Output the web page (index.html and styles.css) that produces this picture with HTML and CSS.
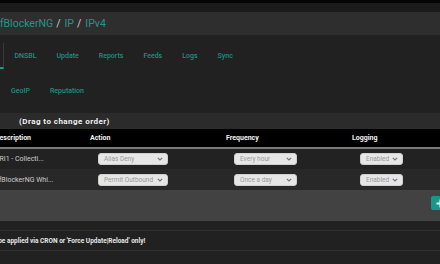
FILE: index.html
```html
<!DOCTYPE html>
<html>
<head>
    <title>Firewall: pfBlockerNG: IP: IPv4</title>
    <meta charset="UTF-8">
    <link rel="stylesheet" href="styles.css">
</head>
<body>
    <div class="topbar"></div>

    <!-- Fil d'Ariane -->
    <div class="crumbs">
        <a class="crumb first">pfBlockerNG</a><span class="sep">/</span><a class="crumb">IP</a><span class="sep">/</span><a class="crumb">IPv4</a>
    </div>

    <!-- Onglets -->
    <nav class="tabs tabs-main">
        <a class="tab active">IP</a>
        <a class="tab">DNSBL</a>
        <a class="tab">Update</a>
        <a class="tab">Reports</a>
        <a class="tab">Feeds</a>
        <a class="tab">Logs</a>
        <a class="tab">Sync</a>
    </nav>
    <nav class="tabs tabs-sub">
        <a class="tab">IPv6</a>
        <a class="tab">GeoIP</a>
        <a class="tab">Reputation</a>
    </nav>

    <div class="panel">
        <div class="panel-heading">(Drag to change order)</div>
        <table class="feeds">
            <colgroup>
                <col style="width: 95px">
                <col style="width: 136px">
                <col style="width: 126px">
                <col style="width: 94px">
            </colgroup>
            <thead>
                <tr>
                    <th>Description</th>
                    <th>Action</th>
                    <th>Frequency</th>
                    <th>Logging</th>
                </tr>
            </thead>
            <tbody>
                <tr>
                    <td class="desc">PRI1 - Collecti...</td>
                    <td><div class="select sel-action"><span>Alias Deny</span><svg width="6" height="4" viewBox="0 0 6 4"><path d="M0.8 0.8 L3 3 L5.2 0.8" fill="none" stroke="#777" stroke-width="1.2"/></svg></div></td>
                    <td><div class="select sel-freq"><span>Every hour</span><svg width="6" height="4" viewBox="0 0 6 4"><path d="M0.8 0.8 L3 3 L5.2 0.8" fill="none" stroke="#777" stroke-width="1.2"/></svg></div></td>
                    <td><div class="select sel-log"><span>Enabled</span><svg width="6" height="4" viewBox="0 0 6 4"><path d="M0.8 0.8 L3 3 L5.2 0.8" fill="none" stroke="#777" stroke-width="1.2"/></svg></div></td>
                </tr>
                <tr>
                    <td class="desc">pfBlockerNG Whi...</td>
                    <td><div class="select sel-action"><span>Permit Outbound</span><svg width="6" height="4" viewBox="0 0 6 4"><path d="M0.8 0.8 L3 3 L5.2 0.8" fill="none" stroke="#777" stroke-width="1.2"/></svg></div></td>
                    <td><div class="select sel-freq"><span>Once a day</span><svg width="6" height="4" viewBox="0 0 6 4"><path d="M0.8 0.8 L3 3 L5.2 0.8" fill="none" stroke="#777" stroke-width="1.2"/></svg></div></td>
                    <td><div class="select sel-log"><span>Enabled</span><svg width="6" height="4" viewBox="0 0 6 4"><path d="M0.8 0.8 L3 3 L5.2 0.8" fill="none" stroke="#777" stroke-width="1.2"/></svg></div></td>
                </tr>
            </tbody>
        </table>
        <div class="panel-footer">
            <button class="btn-add" type="button">
                <svg width="9" height="9" viewBox="0 0 9 9"><path d="M4.5 0.5 V8.5 M0.5 4.5 H8.5" stroke="#fff" stroke-width="2"/></svg>
            </button>
        </div>
    </div>

    <!-- Note -->
    <div class="note"><span>Note: Changes will be applied via CRON or 'Force Update|Reload' only!</span></div>
</body>
</html>
```

FILE: styles.css
```css
html, body {
    margin: 0;
    padding: 0;
}
body {
    background-color: #212121;
    font-family: Roboto, "Liberation Sans", sans-serif;
    width: 440px;
    height: 264px;
    overflow: hidden;
}
a {
    text-decoration: none;
    cursor: pointer;
}
.topbar {
    height: 9px;
    border-top: 3px solid #050505;
    background-color: #1b1b1b;
}
.crumbs {
    height: 23px;
    line-height: 23px;
    background-color: #2e2e2e;
    font-size: 10.5px;
    white-space: nowrap;
}
.crumb {
    color: #22978a;
}
.crumb.first {
    margin-left: -6px;
}
.sep {
    color: #cfcfcf;
    margin: 0 4px 0 3px;
}
.tabs {
    display: flex;
    white-space: nowrap;
}
.tabs-main {
    margin-top: 8px;
    margin-left: -23px;
}
.tabs-sub {
    margin-top: 9px;
    margin-left: -33px;
}
.tab {
    display: block;
    height: 24px;
    line-height: 27px;
    padding: 0 10px;
    font-size: 7px;
    font-weight: 500;
    color: #1e9083;
    border-bottom: 2px solid transparent;
}
.tab.active {
    border-right: 1px solid #3a3a3a;
    border-bottom-color: #1d9a8c;
    color: #e0e0e0;
}
.panel {
    margin-top: 9px;
}
.panel-heading {
    height: 16px;
    line-height: 17px;
    background-color: #2b2b2b;
    color: #f2f2f2;
    font-size: 8px;
    font-weight: bold;
    letter-spacing: 0.45px;
    padding-left: 19px;
}
.feeds {
    border-collapse: collapse;
    table-layout: fixed;
    width: 451px;
    margin-left: -5px;
    font-size: 7px;
}
.feeds th {
    background-color: #000;
    color: #f4f4f4;
    font-weight: bold;
    text-align: left;
    height: 18px;
    padding: 0;
    border-bottom: 2px solid #7a7a7a;
}
.feeds td {
    padding: 0 0 0 8px;
    height: 20px;
}
.feeds tbody tr:nth-child(1) {
    background-color: #222;
}
.feeds tbody tr:nth-child(2) {
    background-color: #282828;
}
.feeds tbody tr:nth-child(2) td {
    height: 21px;
}
.feeds td.desc {
    padding-left: 0;
    color: #cccccc;
    white-space: nowrap;
}
.select {
    display: flex;
    align-items: center;
    justify-content: space-between;
    box-sizing: border-box;
    height: 12px;
    padding: 0 4px 0 5px;
    background-color: #e6e6e6;
    border: 1px solid #cfcfcf;
    border-radius: 3px;
    color: #9a9a9a;
    font-size: 6.5px;
    white-space: nowrap;
}
.select svg {
    flex: none;
    margin-left: 3px;
}
.sel-action {
    width: 70px;
}
.sel-freq {
    width: 63px;
}
.sel-log {
    width: 43px;
}
.panel-footer {
    display: flex;
    justify-content: flex-end;
    height: 31px;
    background-color: #424242;
    margin-right: -9px;
}
.btn-add {
    display: flex;
    align-items: center;
    justify-content: center;
    width: 18px;
    height: 14px;
    margin-top: 6px;
    padding: 0;
    border: none;
    border-radius: 2px;
    background-color: #14998a;
}
.note {
    margin-top: 9px;
    height: 19px;
    line-height: 20px;
    border-top: 1px solid #2e2e2e;
    border-bottom: 1px solid #2e2e2e;
    color: #e6e6e6;
    font-size: 6.5px;
    font-weight: bold;
    white-space: nowrap;
}
.note span {
    display: inline-block;
    margin-left: -58px;
}
```
